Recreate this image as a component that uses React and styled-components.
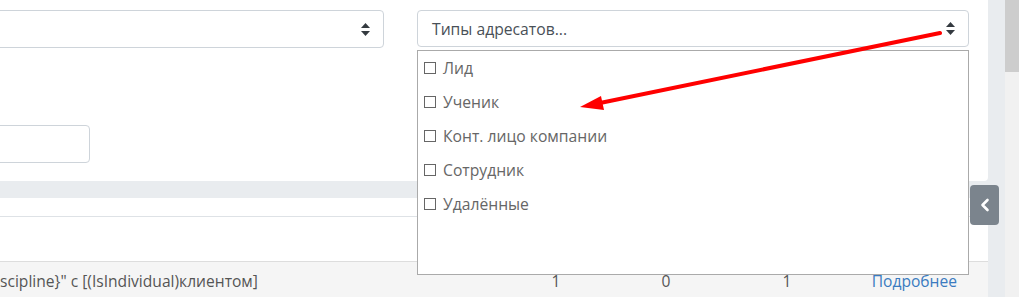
import React from "react";
import styled, { createGlobalStyle } from "styled-components";

const Global = createGlobalStyle`
  html, body { margin: 0; padding: 0; }
  body {
    background: #e9ecef;
    font-family: "Open Sans", "Noto Sans", sans-serif;
    overflow: hidden;
  }
  #root { height: 297px; }
`;

const Page = styled.div`
  position: relative;
  display: flex;
  width: 1019px;
  height: 297px;
  overflow: hidden;
`;

const Main = styled.div`
  width: 988px;
  display: flex;
  flex-direction: column;
  gap: 17px;
`;

const Gutter = styled.div`
  width: 17px;
  background: #e9ecef;
`;

const Scrollbar = styled.div`
  width: 14px;
  background: #f1f1f1;
  display: flex;
  flex-direction: column;
`;

const Thumb = styled.div`
  height: 72px;
  background: #cdcdcd;
`;

const Card = styled.div`
  background: #fff;
  border-radius: ${(p) => p.$radius || "0"};
  position: relative;
  flex: ${(p) => (p.$grow ? "1" : "none")};
  height: ${(p) => p.$height || "auto"};
`;

const FilterArea = styled.div`
  padding-top: 10px;
  margin-left: -30px;
  display: flex;
  flex-direction: column;
  gap: 77px;
`;

const SelectRow = styled.div`
  display: flex;
  gap: 33px;
`;

const SelectWrap = styled.div`
  position: relative;
  width: ${(p) => p.$w}px;
`;

const SelectBox = styled.div`
  box-sizing: border-box;
  height: ${(p) => p.$h || 38}px;
  border: 1px solid #ced4da;
  border-radius: 4px;
  background: #fff;
  display: flex;
  align-items: center;
  justify-content: space-between;
  padding: 0 13px 0 14px;
  font-size: 15.7px;
  color: #495057;
`;

const Input = styled.div`
  box-sizing: border-box;
  width: 120px;
  height: 38px;
  border: 1px solid #ced4da;
  border-radius: 4px;
  background: #fff;
`;

const Dropdown = styled.div`
  position: absolute;
  top: 40px;
  left: 0;
  right: 0;
  height: 225px;
  box-sizing: border-box;
  border: 1px solid #aaa;
  background: #fff;
  z-index: 5;
  padding: 0 0 0 6px;
  display: flex;
  flex-direction: column;
`;

const Item = styled.label`
  height: 34px;
  display: flex;
  align-items: center;
  gap: 7px;
  font-size: 15.7px;
  line-height: 20px;
  color: #666;
  padding-bottom: 1px;
  box-sizing: border-box;
`;

const Box = styled.span`
  width: 12px;
  height: 12px;
  box-sizing: border-box;
  border: 1px solid #666;
  display: inline-block;
  flex: none;
`;

const CardHead = styled.div`
  height: 18px;
  border-bottom: 1px solid #dee2e6;
`;

const CardBody = styled.div`
  height: 44px;
`;

const Row = styled.div`
  border-top: 1px solid #ddd;
  background: #f5f5f5;
  display: grid;
  grid-template-columns: 500px 112px 108px 134px 1fr;
  align-items: center;
  height: 36px;
  font-size: 15.6px;
  color: #555;
  padding-right: 31px;
`;

const Cell = styled.div`
  text-align: ${(p) => p.$align || "left"};
  color: ${(p) => (p.$link ? "#3a7bc0" : "#555")};
  padding-top: 2px;
  white-space: nowrap;
`;

const Toggle = styled.div`
  position: absolute;
  left: 970px;
  top: 185px;
  width: 29px;
  height: 40px;
  border-radius: 4px;
  background: #7b848d;
  display: flex;
  align-items: center;
  justify-content: center;
  z-index: 6;
`;

const Overlay = styled.svg`
  position: absolute;
  left: 0;
  top: 0;
  pointer-events: none;
  z-index: 10;
`;

const Carets = () => (
  <svg width="9" height="13" viewBox="0 0 9 13">
    <path d="M4.5 0 L9 5 L0 5 Z" fill="#343a40" />
    <path d="M0 8 L9 8 L4.5 13 Z" fill="#343a40" />
  </svg>
);

const items = ["Лид", "Ученик", "Конт. лицо компании", "Сотрудник", "Удалённые"];

export default function App() {
  return (
    <>
      <Global />
      <Page>
        <Main>
          <Card $height="181px" $radius="0 0 4px 0">
            <FilterArea>
              <SelectRow>
                <SelectWrap $w={414}>
                  <SelectBox>
                    <span />
                    <Carets />
                  </SelectBox>
                </SelectWrap>
                <SelectWrap $w={552}>
                  <SelectBox $h={37}>
                    <span>Типы адресатов...</span>
                    <Carets />
                  </SelectBox>
                  <Dropdown>
                    {items.map((t) => (
                      <Item key={t}>
                        <Box />
                        {t}
                      </Item>
                    ))}
                  </Dropdown>
                </SelectWrap>
              </SelectRow>
              <Input />
            </FilterArea>
          </Card>
          <Card $grow $radius="0 4px 0 0">
            <CardHead />
            <CardBody />
            <Row>
              <Cell>scipline}" c [(IsIndividual)клиентом]</Cell>
              <Cell $align="center">1</Cell>
              <Cell $align="center">0</Cell>
              <Cell $align="center">1</Cell>
              <Cell $align="right" $link>Подробнее</Cell>
            </Row>
          </Card>
        </Main>
        <Gutter />
        <Scrollbar>
          <Thumb />
        </Scrollbar>
        <Toggle>
          <svg width="12" height="14" viewBox="0 0 12 14">
            <path d="M8.5 2 L3.5 7 L8.5 12" stroke="#fff" strokeWidth="2.6" fill="none" strokeLinecap="round" strokeLinejoin="round" />
          </svg>
        </Toggle>
        <Overlay width="1019" height="297" viewBox="0 0 1019 297">
          <line x1="940" y1="33" x2="600" y2="103" stroke="#ff0000" strokeWidth="4" strokeLinecap="round" />
          <path d="M580 107 L601 96 L604 110 Z" fill="#ff0000" />
        </Overlay>
      </Page>
    </>
  );
}
